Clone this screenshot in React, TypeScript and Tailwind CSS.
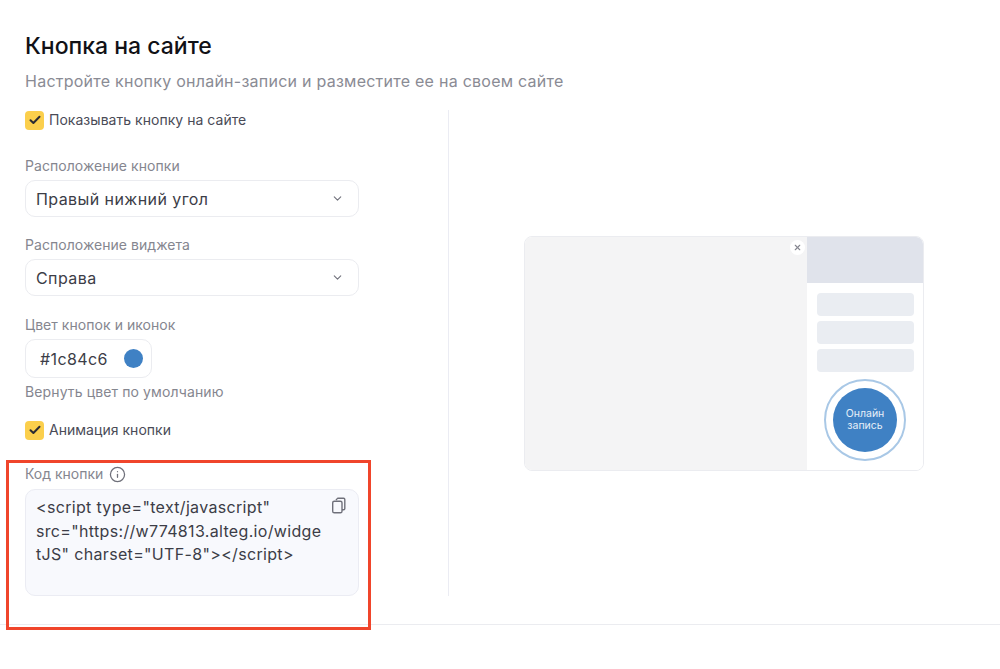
import { ChevronDown, Info, X } from 'lucide-react';

const Checkbox = ({ label }: { label: string }) => (
  <div className="flex items-center h-[20px]">
    <div className="w-[19px] h-[19px] rounded-[4px] bg-[#fbcf4c] flex items-center justify-center">
      <svg width="12" height="10" viewBox="0 0 12 10" fill="none" stroke="#2b2b33" strokeWidth="2" strokeLinecap="round" strokeLinejoin="round">
        <path d="M1.5 5.2 4.4 8 10.5 1.8" />
      </svg>
    </div>
    <span className="ml-[5px] text-[14px] leading-[20px] tracking-[0.03px] text-[#4a4b57]">{label}</span>
  </div>
);

const Select = ({ label, value }: { label: string; value: string }) => (
  <div>
    <div className="text-[14px] leading-[20px] tracking-[0.05px] text-[#85868f]">{label}</div>
    <div className="mt-[4px] w-[334px] h-[37px] rounded-[10px] border border-[#ebecf0] pl-[10px] pr-[14px] flex items-center justify-between">
      <span className="text-[16px] leading-[24px] tracking-[0.42px] text-[#3c3d47]">{value}</span>
      <ChevronDown size={13} strokeWidth={2} className="text-[#71727c]" />
    </div>
  </div>
);

export default function App() {
  return (
    <div className="relative w-[1000px] h-[669px] overflow-hidden bg-white font-['Inter',sans-serif]">
      <div className="pl-[25px] pt-[32px]">
        <h1 className="text-[23px] leading-[28px] font-medium text-[#111116]">Кнопка на сайте</h1>
        <p className="mt-[9px] text-[16px] leading-[24px] tracking-[0.25px] text-[#8a8b94]">
          Настройте кнопку онлайн-записи и разместите ее на своем сайте
        </p>
      </div>

      <div className="flex pl-[25px] mt-[17px] h-[486px]">
        <div className="w-[424px] border-r border-[#ebecf3]">
          <Checkbox label="Показывать кнопку на сайте" />
          <div className="mt-[26px] flex flex-col gap-[18px]">
            <Select label="Расположение кнопки" value="Правый нижний угол" />
            <Select label="Расположение виджета" value="Справа" />
          </div>
          <div className="mt-[19px] text-[14px] leading-[20px] tracking-[0.05px] text-[#85868f]">Цвет кнопок и иконок</div>
          <div className="mt-[4px] w-[127px] h-[39px] rounded-[10px] border border-[#ebecf0] pl-[14px] pr-[8px] flex items-center justify-between">
            <span className="text-[16px] tracking-[0.4px] text-[#3c3d47]">#1c84c6</span>
            <span className="w-[19px] h-[19px] rounded-full bg-[#3f81c4]" />
          </div>
          <div className="mt-[4px] text-[14px] leading-[20px] tracking-[0.12px] text-[#85868f]">Вернуть цвет по умолчанию</div>
          <div className="mt-[18px]">
            <Checkbox label="Анимация кнопки" />
          </div>
          <div className="mt-[24px] flex items-center h-[20px]">
            <span className="text-[14px] leading-[20px] text-[#85868f]">Код кнопки</span>
            <Info size={17} strokeWidth={1.8} className="ml-[6px] text-[#6f707a]" />
          </div>
          <div className="relative mt-[5px] w-[334px] h-[107px] rounded-[10px] border border-[#ebecf3] bg-[#f8f9fd] pl-[10px] pt-[6px]">
            <div className="text-[16px] leading-[23.5px] tracking-[0.33px] text-[#3c3d47] whitespace-nowrap">
              {'<script type="text/javascript"'}
              <br />
              {'src="https://w774813.alteg.io/widge'}
              <br />
              {'tJS" charset="UTF-8"></script>'}
            </div>
            <svg width="16" height="17" viewBox="0 0 16 17" fill="none" stroke="#6f707a" strokeWidth="1.4" strokeLinejoin="round" className="absolute right-[11px] top-[7px]">
              <path d="M5 3.2 6.2 1.6c.2-.3.5-.4.8-.4h5.6c.7 0 1.2.5 1.2 1.2v9.2c0 .7-.5 1.2-1.2 1.2H11" />
              <rect x="1.7" y="4.2" width="9.3" height="11.6" rx="1.6" />
            </svg>
          </div>
        </div>

        <div className="flex-1 flex items-center pl-[75px]">
          <div className="w-[400px] h-[235px] rounded-[8px] border border-[#ebecf0] flex overflow-hidden">
            <div className="relative flex-1 bg-[#f4f4f5]">
              <div className="absolute right-[2px] top-[3px] w-[15px] h-[15px] rounded-full bg-white flex items-center justify-center">
                <X size={9} strokeWidth={3} className="text-[#85868f]" />
              </div>
            </div>
            <div className="w-[116px] bg-white flex flex-col items-center">
              <div className="w-full h-[46px] bg-[#e0e3eb]" />
              <div className="mt-[10px] flex flex-col gap-[5px]">
                <div className="w-[97px] h-[23px] rounded-[4px] bg-[#eaedf2]" />
                <div className="w-[97px] h-[23px] rounded-[4px] bg-[#eaedf2]" />
                <div className="w-[97px] h-[23px] rounded-[4px] bg-[#eaedf2]" />
              </div>
              <div className="mt-[7px] w-[82px] h-[82px] rounded-full border-2 border-[#a9c8e6] flex items-center justify-center">
                <div className="w-[64px] h-[64px] rounded-full bg-[#3f81c4] flex items-center justify-center text-center text-[#e6eff8] text-[10.5px] leading-[12px]">
                  Онлайн
                  <br />
                  запись
                </div>
              </div>
            </div>
          </div>
        </div>
      </div>

      <div className="mt-[28px] border-t border-[#ebecf0]" />

      <div className="absolute left-[6px] top-[460px] w-[365px] h-[170px] border-[3px] border-[#f0452b]" />
    </div>
  );
}
